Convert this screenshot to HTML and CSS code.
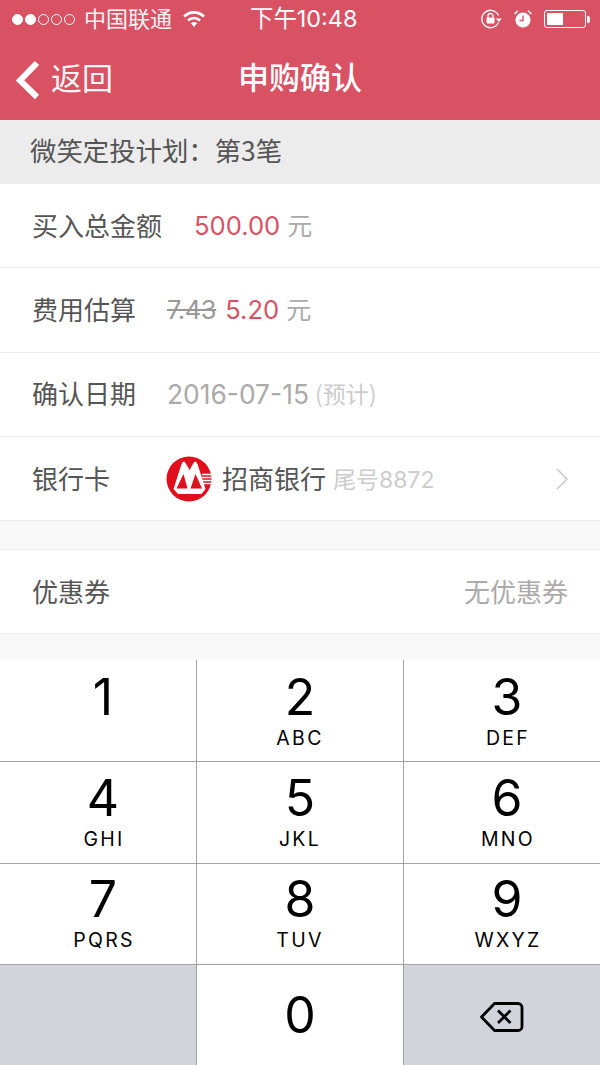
FILE: index.html
```html
<!DOCTYPE html>
<html lang="zh-CN">
<head>
<meta charset="utf-8">
<title>申购确认</title>
<link rel="stylesheet" href="styles.css">
</head>
<body>
<div class="screen">
  <header class="top">
    <div class="status">
      <div class="status-left">
        <span class="dots"><i class="dot on"></i><i class="dot on"></i><i class="dot"></i><i class="dot"></i><i class="dot"></i></span>
        <span class="carrier">中国联通</span>
        <svg class="wifi" width="24" height="18" viewBox="0 0 24 18"><path d="M2 6.500C8 1 16 1 22 6.500" fill="none" stroke="#fff" stroke-width="2.600"/><path d="M6 10.500c3.600-3.200 8.400-3.200 12 0" fill="none" stroke="#fff" stroke-width="2.600"/><path d="M8.800 13.200c2-1.500 4.400-1.500 6.400 0L12 17z" fill="#fff"/></svg>
      </div>
      <div class="clock">下午10:48</div>
      <div class="status-right">
        <svg class="lock" width="23" height="20" viewBox="0 0 23 20"><path d="M18.500 13.500A8.700 8.700 0 1 1 18.500 6.500" fill="none" stroke="#fff" stroke-width="1.300"/><path d="M15.800 9.500h6l-3 3.500z" fill="#fff"/><rect x="6.500" y="8.500" width="8" height="6" rx="1" fill="#fff"/><path d="M8 8.500V7a2.500 2.500 0 0 1 5 0v1.500" fill="none" stroke="#fff" stroke-width="1.300"/></svg>
        <svg class="alarm" width="20" height="20" viewBox="0 0 20 20"><circle cx="10" cy="11" r="7.600" fill="#fff"/><path d="M10 6.500V11.500H6.500" fill="none" stroke="#d95264" stroke-width="1.400"/><path d="M1.500 5L5 1.800M18.500 5L15 1.800" stroke="#fff" stroke-width="1.500" fill="none"/></svg>
        <div class="battery"><div class="battery-body"><div class="battery-fill"></div></div><div class="battery-tip"></div></div>
      </div>
    </div>
    <div class="nav">
      <div class="back">
        <svg width="26" height="40" viewBox="0 0 26 40"><path d="M23 3L6 20.500L23 37" fill="none" stroke="#fff" stroke-width="6"/></svg>
        <span>返回</span>
      </div>
      <div class="title">申购确认</div>
    </div>
  </header>
  <div class="plan">微笑定投计划：第3笔</div>
  <section class="group">
    <div class="row">
      <span class="label w-a">买入总金额</span>
      <span class="red">500.00</span><span class="unit">元</span>
    </div>
    <div class="row">
      <span class="label w-b">费用估算</span>
      <s class="old">7.43</s><span class="red fee">5.20</span><span class="unit">元</span>
    </div>
    <div class="row">
      <span class="label w-b">确认日期</span>
      <span class="date">2016-07-15</span><span class="hint">(预计)</span>
    </div>
    <div class="row">
      <span class="label w-c">银行卡</span>
      <svg class="logo" width="46" height="46" viewBox="0 0 46 46">
        <circle cx="23" cy="23" r="22.500" fill="#e10f1c"/>
        <path d="M7.500 33L15.500 8Q17.500 3.500 19.500 7L23.500 14L27.500 7Q29.500 3.500 31.500 8L39.500 33L35.500 38H12z" fill="#fff"/>
        <path d="M10.500 32.500L17.500 18L21.500 32.500zM24.500 32.500L29.500 18L36 32.500z" fill="#e10f1c"/>
        <path d="M36 18.500h10M36 21.500h10M36 24.500h9.500M36 27.500h9" stroke="#fff" stroke-width="1.300"/>
      </svg>
      <span class="bank">招商银行</span>
      <span class="tail">尾号8872</span>
      <svg class="chev" width="14" height="24" viewBox="0 0 14 24"><path d="M2 2l10 10L2 22" fill="none" stroke="#c9c9c9" stroke-width="1.500"/></svg>
    </div>
  </section>
  <section class="group coupon-group">
    <div class="row coupon">
      <span class="label">优惠券</span>
      <span class="none">无优惠券</span>
    </div>
  </section>
  <div class="pad">
    <div class="key side r1"><b>1</b></div>
    <div class="key r1"><b>2</b><small>ABC</small></div>
    <div class="key side r1"><b>3</b><small>DEF</small></div>
    <div class="key side r2"><b>4</b><small>GHI</small></div>
    <div class="key r2"><b>5</b><small>JKL</small></div>
    <div class="key side r2"><b>6</b><small>MNO</small></div>
    <div class="key side r3"><b>7</b><small>PQRS</small></div>
    <div class="key r3"><b>8</b><small>TUV</small></div>
    <div class="key side r3"><b>9</b><small>WXYZ</small></div>
    <div class="key grey last"></div>
    <div class="key zero last"><b>0</b></div>
    <div class="key grey del last">
      <svg width="46" height="34" viewBox="0 0 46 34"><path d="M15.500 3.500H39a4 4 0 0 1 4 4v19a4 4 0 0 1-4 4H15.500L2.500 17z" fill="none" stroke="#000" stroke-width="2.800" stroke-linejoin="round"/><path d="M19 10.500l12.500 12.500M31.500 10.500L19 23" fill="none" stroke="#000" stroke-width="2.800"/></svg>
    </div>
  </div>
</div>
</body>
</html>
```
FILE: styles.css
```css
* { box-sizing: border-box; }
html, body { margin: 0; padding: 0; }
body { font-family: "Noto Sans CJK SC", "Liberation Sans", sans-serif; background: #f8f8f8; }
.screen { width: 600px; height: 1065px; overflow: hidden; display: flex; flex-direction: column; }
.top { height: 120px; background: #d95264; color: #fff; flex: none; }
.status { height: 40px; display: flex; align-items: center; justify-content: space-between; position: relative; padding: 0 10px 2px 12px; }
.status-left { display: flex; align-items: center; }
.dots { display: flex; gap: 2px; }
.dot { width: 11px; height: 11px; border-radius: 50%; border: 1px solid #fff; display: block; }
.dot.on { background: #fff; }
.carrier { font-size: 22px; margin-left: 9px; margin-bottom: 4px; opacity: .92; line-height: 30px; }
.wifi { margin-left: 10px; }
.clock { position: absolute; left: 250px; top: 4px; font-family: Inter, "Noto Sans CJK SC", sans-serif; font-size: 23.400px; line-height: 30px; }
.status-right { display: flex; align-items: center; }
.alarm { margin-left: 10px; }
.battery { display: flex; align-items: center; margin-left: 11px; }
.battery-body { width: 42px; height: 18px; border: 1px solid #fff; border-radius: 3px; padding: 2px; }
.battery-fill { width: 16px; height: 12px; background: #fff; }
.battery-tip { width: 3px; height: 7px; background: #fff; margin-left: 1px; border-radius: 0 2px 2px 0; }
.nav { height: 80px; display: flex; align-items: center; position: relative; }
.back { display: flex; align-items: center; padding-left: 14px; font-size: 31px; }
.back span { margin-left: 11px; margin-bottom: 6px; line-height: 40px; opacity: .95; }
.title { position: absolute; left: 0; right: 0; text-align: center; font-size: 31px; font-weight: 500; line-height: 40px; top: 16px; }
.plan { height: 64px; flex: none; background: #ececec; color: #555; font-size: 26.400px; line-height: 60px; padding-left: 30px; }
.group { background: #fff; flex: none; }
.row { height: 84.300px; display: flex; align-items: center; padding-left: 32px; border-bottom: 1px solid #ececec; font-size: 26px; }
.label { color: #555; flex: none; margin-bottom: 3px; }
.w-a { width: 162px; }
.w-b { width: 135px; }
.w-c { width: 134px; }
.red { color: #d95264; font-family: Inter, "Liberation Sans", sans-serif; font-size: 25.600px; }
.unit { color: #aaa; margin-left: 7px; margin-bottom: 3px; font-size: 25px; }
.old { color: #999; font-family: Inter, "Liberation Sans", sans-serif; font-size: 25.500px; letter-spacing: -.4px; }
.fee { margin-left: 9px; }
.date { color: #aaa; font-family: Inter, "Liberation Sans", sans-serif; font-size: 26.400px; }
.hint { color: #ccc; font-size: 23px; margin-left: 6px; margin-bottom: 2px; }
.logo { flex: none; }
.bank { color: #555; margin-left: 10px; margin-bottom: 3px; }
.tail { color: #ccc; font-family: Inter, "Noto Sans CJK SC", sans-serif; font-size: 23px; margin-left: 7px; margin-bottom: 2px; }
.chev { margin-left: auto; margin-right: 31px; }
.coupon-group { margin-top: 28px; border-top: 1px solid #ececec; }
.coupon { justify-content: space-between; padding-right: 32px; }
.none { color: #aaa; margin-bottom: 3px; }
.pad { margin-top: 26px; flex: 1; display: grid; grid-template-columns: 196px 207px 197px; grid-template-rows: 102px 102px 101px 1fr; background: #fff; }
.key { display: flex; flex-direction: column; align-items: center; background: #fff; border-left: 1px solid #a3a3a3; border-bottom: 1px solid #a3a3a3; color: #000; font-family: Inter, "Liberation Sans", sans-serif; }
.key:nth-child(3n+1) { border-left: 0; }
.key.last { border-bottom: 0; }
.side { padding-left: 10px; }
.key b { font-weight: 400; font-size: 50px; line-height: 60px; }
.r1 b { margin-top: 7px; }
.r2 b { margin-top: 6px; }
.r3 b { margin-top: 5px; }
.key small { font-size: 19.500px; letter-spacing: 2.300px; line-height: 24px; margin-top: -1px; }
.side small { margin-left: 2px; }
.grey { background: #d1d4db; }
.zero b { margin-top: 20px; }
.del { justify-content: center; padding-top: 3px; }
```
